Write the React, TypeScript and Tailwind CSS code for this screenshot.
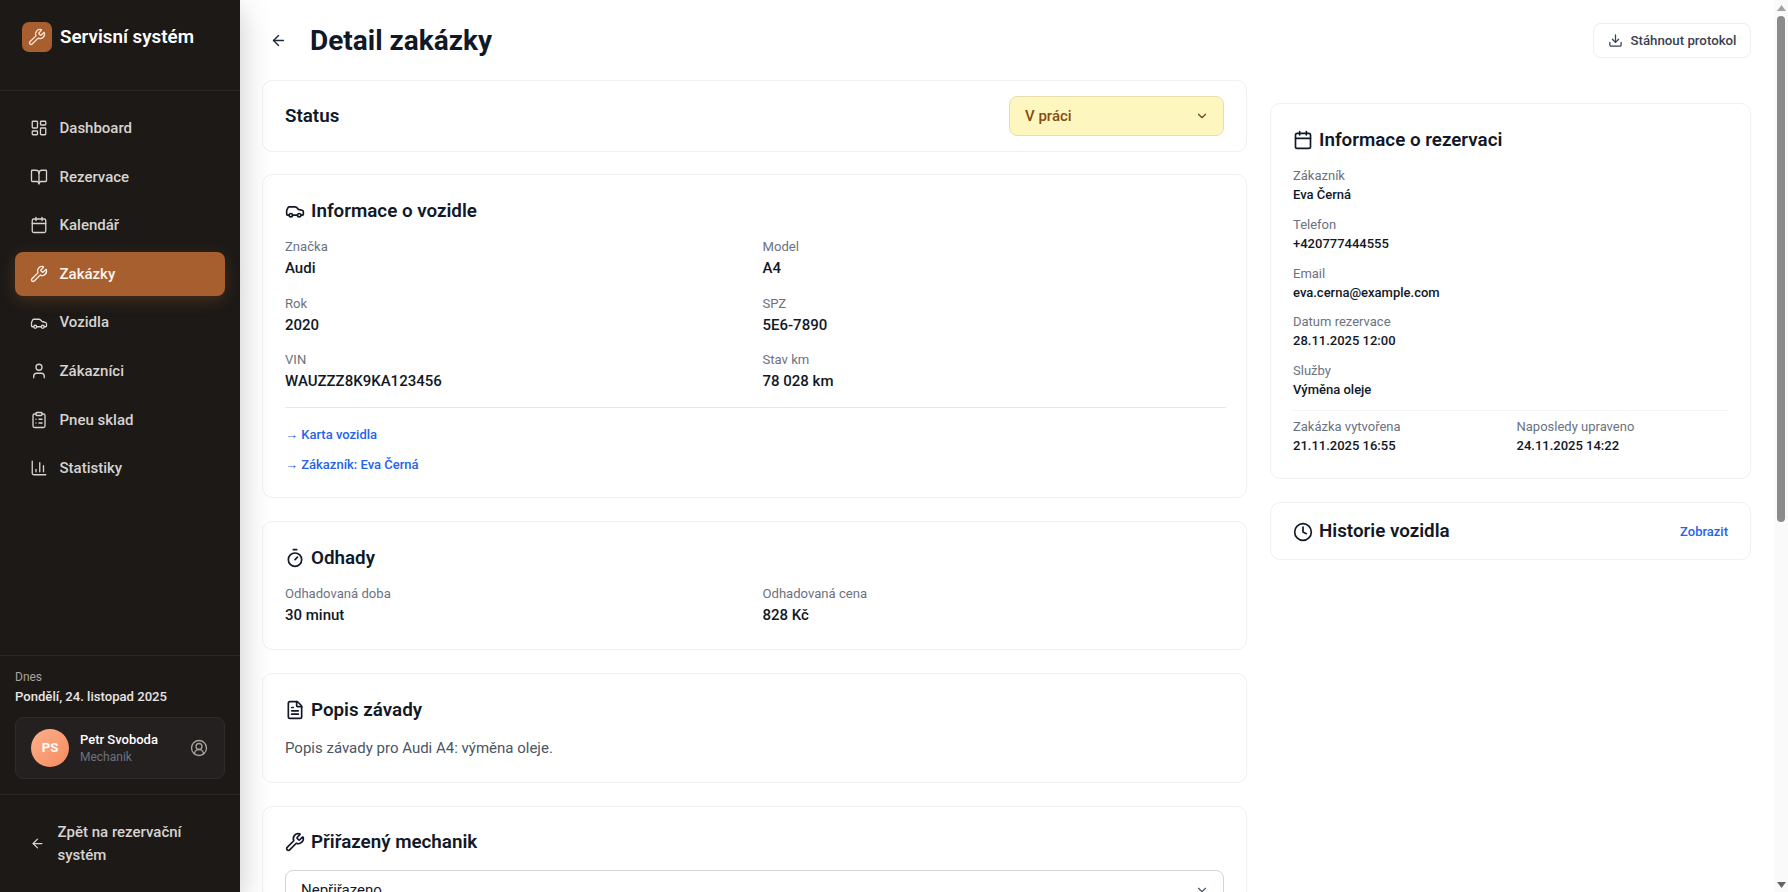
import type { ReactNode } from "react";
import {
  ArrowLeft,
  BookOpen,
  Calendar,
  Car,
  ChartColumn,
  ChevronDown,
  CircleUserRound,
  ClipboardList,
  Clock,
  Download,
  FileText,
  LayoutDashboard,
  Timer,
  User,
  Wrench,
} from "lucide-react";

const navItems = [
  { label: "Dashboard", icon: LayoutDashboard },
  { label: "Rezervace", icon: BookOpen },
  { label: "Kalendář", icon: Calendar },
  { label: "Zakázky", icon: Wrench, active: true },
  { label: "Vozidla", icon: Car },
  { label: "Zákazníci", icon: User },
  { label: "Pneu sklad", icon: ClipboardList },
  { label: "Statistiky", icon: ChartColumn },
];

const vehicleFields = [
  { label: "Značka", value: "Audi" },
  { label: "Model", value: "A4" },
  { label: "Rok", value: "2020" },
  { label: "SPZ", value: "5E6-7890" },
  { label: "VIN", value: "WAUZZZ8K9KA123456" },
  { label: "Stav km", value: "78 028 km" },
];

const bookingFields = [
  { label: "Zákazník", value: "Eva Černá" },
  { label: "Telefon", value: "+420777444555" },
  { label: "Email", value: "eva.cerna@example.com" },
  { label: "Datum rezervace", value: "28.11.2025 12:00" },
  { label: "Služby", value: "Výměna oleje" },
];

const Card = ({ className, children }: { className: string; children: ReactNode }) => (
  <div className={`rounded-[10px] border border-[#f0f0f1] bg-white px-[22px] ${className}`}>{children}</div>
);

const CardTitle = ({ icon, children }: { icon: ReactNode; children: ReactNode }) => (
  <h2 className="flex h-[28px] items-center gap-[6px] text-[18.8px] font-semibold text-[#111827]">
    {icon}
    {children}
  </h2>
);

const Field = ({ label, value }: { label: string; value: string }) => (
  <div>
    <p className="text-[13.1px] leading-[20px] text-[#6b7280]">{label}</p>
    <p className="text-[15px] leading-[22px] font-medium text-[#111827]">{value}</p>
  </div>
);

const SmallField = ({ label, value }: { label: string; value: string }) => (
  <div>
    <p className="text-[13px] leading-[19px] text-[#6b7280]">{label}</p>
    <p className="text-[13px] leading-[19px] font-medium text-[#111827]">{value}</p>
  </div>
);

const Sidebar = () => (
  <aside className="z-10 flex h-full w-[240px] shrink-0 flex-col bg-[#1c1917] shadow-[0_10px_30px_rgba(0,0,0,0.22)]">
    <div className="flex h-[91px] shrink-0 items-start gap-[8px] border-b border-[#27272a] pt-[22px] pl-[22px]">
      <div className="flex h-[30px] w-[30px] items-center justify-center rounded-[7px] bg-[#a85f30]">
        <Wrench className="h-[18px] w-[18px] text-[#fde7d3]" strokeWidth={1.75} />
      </div>
      <span className="text-[18.8px] leading-[31px] font-semibold text-white">Servisní systém</span>
    </div>
    <nav className="flex flex-1 flex-col gap-[4px] px-[15px] pt-[15px]">
      {navItems.map((item) => (
        <a
          key={item.label}
          className={`flex h-[44.6px] items-center gap-[11.5px] rounded-[8px] pl-[16px] text-[15px] font-medium ${
            item.active
              ? "bg-[#a85f30] text-[#fdf4ec] shadow-[0_4px_16px_rgba(168,95,48,0.3)]"
              : "text-[#d6d3d1]"
          }`}
        >
          <item.icon className="-ml-[1px] h-[18px] w-[18px]" strokeWidth={1.75} />
          {item.label}
        </a>
      ))}
    </nav>
    <div className="border-t border-[#27272a] px-[15px] pt-[12px] pb-[15px]">
      <p className="text-[12px] leading-[18px] text-[#a8a29e]">Dnes</p>
      <p className="text-[13.1px] leading-[21px] font-medium text-[#e7e5e4]">Pondělí, 24. listopad 2025</p>
      <div className="mt-[10px] flex h-[62px] items-center rounded-[8px] border border-[#2e2b29] bg-[#292524]/60 pr-[16px] pl-[15px]">
        <div className="flex h-[38px] w-[38px] items-center justify-center rounded-full bg-gradient-to-br from-[#fdb08a] to-[#f58a5f] text-[13px] font-bold text-white">
          PS
        </div>
        <div className="ml-[11px] flex-1">
          <p className="text-[13px] leading-[19px] font-medium text-white">Petr Svoboda</p>
          <p className="text-[12px] leading-[17px] text-[#6b7280]">Mechanik</p>
        </div>
        <CircleUserRound className="h-[18px] w-[18px] text-[#a8a29e]" strokeWidth={1.75} />
      </div>
    </div>
    <div className="flex h-[98px] items-center border-t border-[#27272a] pr-[15px] pl-[30px]">
      <ArrowLeft className="h-[15px] w-[15px] shrink-0 text-[#d6d3d1]" />
      <span className="ml-[12.5px] text-[15px] leading-[23px] font-medium text-[#d6d3d1]">
        Zpět na rezervační systém
      </span>
    </div>
  </aside>
);

const PageScrollbar = () => (
  <div className="absolute top-0 right-0 bottom-0 w-[14px] bg-[#fafafa]">
    <svg className="absolute top-[5px] left-[3px]" width="9" height="6" viewBox="0 0 9 6">
      <path d="M4.5 0L9 6H0z" fill="#a3a3a3" />
    </svg>
    <div className="absolute top-[16px] left-[3px] h-[506px] w-[8px] rounded-full bg-[#8b8b8b]" />
    <svg className="absolute bottom-[4px] left-[3px]" width="9" height="6" viewBox="0 0 9 6">
      <path d="M0 0H9L4.5 6z" fill="#666666" />
    </svg>
  </div>
);

export default function App() {
  return (
    <div className="relative flex h-screen overflow-hidden bg-white font-['Roboto',sans-serif]">
      <Sidebar />
      <main className="h-full flex-1 overflow-y-scroll pt-[23px] pr-[37px] pb-[640px] pl-[22px]">
        <header className="flex h-[35px] items-center justify-between">
          <div className="flex items-center">
            <ArrowLeft className="ml-[8px] h-[17px] w-[17px] text-[#1f2937]" />
            <h1 className="ml-[23px] text-[28px] font-bold text-[#111827]">Detail zakázky</h1>
          </div>
          <button className="flex h-[35px] w-[158px] items-center justify-center gap-[8px] rounded-[8px] border border-[#eeeeef] text-[13.25px] font-medium text-[#374151]">
            <Download className="h-[15px] w-[15px]" />
            Stáhnout protokol
          </button>
        </header>
        <div className="mt-[22px] grid grid-cols-[985px_481px] items-start gap-[23px]">
          <div className="flex flex-col gap-[22px]">
            <Card className="flex h-[72px] items-center justify-between">
              <h2 className="text-[18.8px] font-semibold text-[#111827]">Status</h2>
              <div className="flex h-[40px] w-[215px] items-center justify-between rounded-[8px] border border-[#e6e0ae] bg-[#fdf6bf] pr-[14px] pl-[15px] text-[15px] font-medium text-[#854d0e]">
                V práci
                <ChevronDown className="h-[14px] w-[14px] text-[#713f12]" />
              </div>
            </Card>
            <Card className="mb-[1px] h-[324px] pt-[22px]">
              <CardTitle icon={<Car className="h-[20px] w-[20px]" strokeWidth={2} />}>Informace o vozidle</CardTitle>
              <div className="mt-[12px] grid grid-cols-2 gap-x-[16px] gap-y-[14.5px]">
                {vehicleFields.map((field) => (
                  <Field key={field.label} {...field} />
                ))}
              </div>
              <div className="mt-[15px] -mr-[2px] flex flex-col gap-[12px] border-t border-[#e5e7eb] pt-[18px] text-[13px] leading-[18px] font-medium text-[#2563eb]">
                <a>→ Karta vozidla</a>
                <a>→ Zákazník: Eva Černá</a>
              </div>
            </Card>
            <Card className="mb-[1px] h-[129px] pt-[22px]">
              <CardTitle icon={<Timer className="h-[20px] w-[20px]" strokeWidth={2} />}>Odhady</CardTitle>
              <div className="mt-[12px] grid grid-cols-2 gap-x-[16px]">
                <Field label="Odhadovaná doba" value="30 minut" />
                <Field label="Odhadovaná cena" value="828 Kč" />
              </div>
            </Card>
            <Card className="mb-[1px] h-[110px] pt-[22px]">
              <CardTitle icon={<FileText className="h-[20px] w-[20px]" strokeWidth={2} />}>Popis závady</CardTitle>
              <p className="mt-[13px] text-[15px] leading-[22px] text-[#4b5563]">Popis závady pro Audi A4: výměna oleje.</p>
            </Card>
            <Card className="h-[140px] pt-[21px]">
              <CardTitle icon={<Wrench className="h-[20px] w-[20px]" strokeWidth={2} />}>Přiřazený mechanik</CardTitle>
              <div className="mt-[14px] flex h-[40px] items-center justify-between rounded-[8px] border border-[#d1d5db] pr-[14px] pl-[15px] text-[15px] text-[#111827]">
                Nepřiřazeno
                <ChevronDown className="h-[14px] w-[14px] text-[#4b5563]" />
              </div>
            </Card>
          </div>
          <div className="flex flex-col gap-[23px] pt-[23px]">
            <Card className="h-[376px] pt-[22px]">
              <CardTitle icon={<Calendar className="h-[20px] w-[20px]" strokeWidth={2} />}>Informace o rezervaci</CardTitle>
              <div className="mt-[12px] flex flex-col gap-[10.8px]">
                {bookingFields.map((field) => (
                  <SmallField key={field.label} {...field} />
                ))}
              </div>
              <div className="mt-[11px] grid grid-cols-2 gap-x-[12px] border-t border-[#f3f4f6] pt-[6px]">
                <SmallField label="Zakázka vytvořena" value="21.11.2025 16:55" />
                <SmallField label="Naposledy upraveno" value="24.11.2025 14:22" />
              </div>
            </Card>
            <Card className="flex h-[58px] items-center justify-between pt-[1px]">
              <CardTitle icon={<Clock className="h-[20px] w-[20px]" strokeWidth={2} />}>Historie vozidla</CardTitle>
              <a className="text-[13px] font-medium text-[#2563eb]">Zobrazit</a>
            </Card>
          </div>
        </div>
      </main>
      <PageScrollbar />
    </div>
  );
}
